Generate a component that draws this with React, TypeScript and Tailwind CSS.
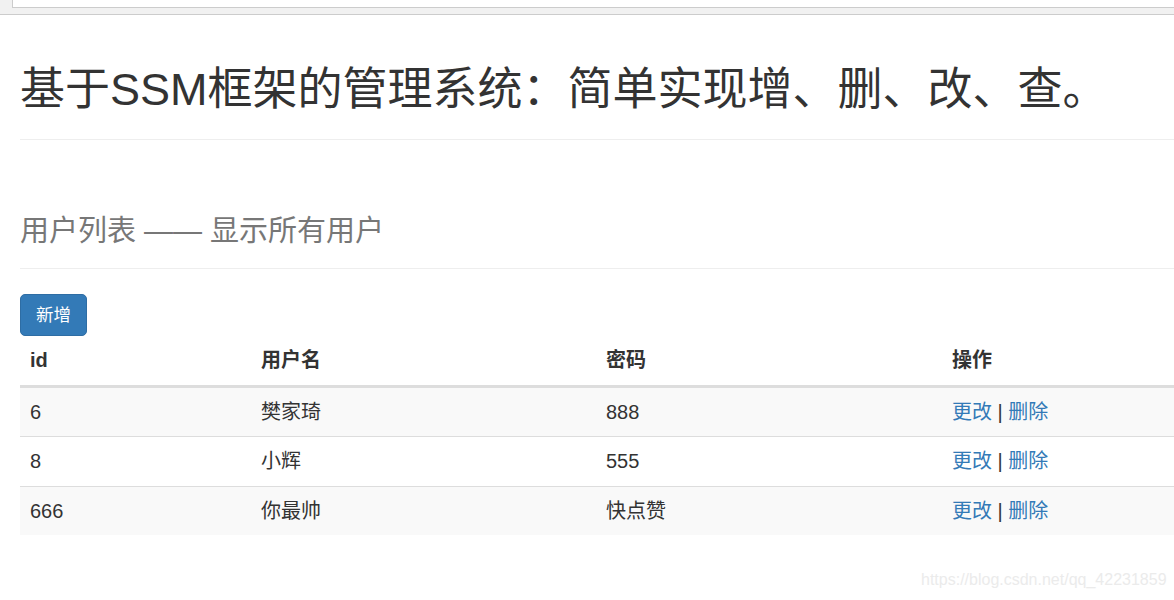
import React from 'react';

interface User {
  id: number;
  username: string;
  password: string;
}

const users: User[] = [
  { id: 6, username: '樊家琦', password: '888' },
  { id: 8, username: '小辉', password: '555' },
  { id: 666, username: '你最帅', password: '快点赞' },
];

const FONT = "font-['Liberation_Sans','Noto_Sans_CJK_SC',sans-serif]";

export default function App() {
  return (
    <div className={`relative w-[1174px] h-[600px] overflow-hidden bg-white text-[#333] ${FONT}`}>
      {/* browser chrome strip */}
      <div className="h-[15px] bg-[#f1f1f1] border-b border-[#ccc]">
        <div className="ml-[12px] h-[8px] bg-white border-l border-b border-[#ccc]"></div>
      </div>

      <div className="pl-[20px]">
        <div className="mt-[50px] pb-[24px] border-b border-[#eee]">
          <h1 className="text-[45px] leading-[50px] font-normal">基于SSM框架的管理系统：简单实现增、删、改、查。</h1>
        </div>

        <div className="mt-[75px] pb-[20px] border-b border-[#eee]">
          <h2 className="text-[29px] leading-[33px] font-normal text-[#777]">用户列表 —— 显示所有用户</h2>
        </div>

        <button className="mt-[25px] h-[42px] px-[15px] text-[17.5px] leading-[25px] text-white bg-[#337ab7] border border-[#2e6da4] rounded-[5px]">
          新增
        </button>

        <table className="w-full table-fixed border-collapse text-[20px] leading-[28.6px]">
          <colgroup>
            <col className="w-[231px]" />
            <col className="w-[345px]" />
            <col className="w-[346px]" />
            <col />
          </colgroup>
          <thead>
            <tr>
              <th className="text-left font-bold px-[10px] py-[10px] border-b-[3px] border-[#ddd]">id</th>
              <th className="text-left font-bold px-[10px] py-[10px] border-b-[3px] border-[#ddd]">用户名</th>
              <th className="text-left font-bold px-[10px] py-[10px] border-b-[3px] border-[#ddd]">密码</th>
              <th className="text-left font-bold px-[10px] py-[10px] border-b-[3px] border-[#ddd]">操作</th>
            </tr>
          </thead>
          <tbody>
            {users.map((u, i) => (
              <tr key={u.id} className={i % 2 === 0 ? 'bg-[#f9f9f9]' : 'bg-white'}>
                <td className="px-[10px] py-[10px] border-t border-[#ddd]">{u.id}</td>
                <td className="px-[10px] py-[10px] border-t border-[#ddd]">{u.username}</td>
                <td className="px-[10px] py-[10px] border-t border-[#ddd]">{u.password}</td>
                <td className="px-[10px] py-[10px] border-t border-[#ddd]">
                  <a className="text-[#337ab7]">更改</a> | <a className="text-[#337ab7]">删除</a>
                </td>
              </tr>
            ))}
          </tbody>
        </table>
      </div>

      {/* watermark */}
      <div className="absolute left-[921px] top-[570px] text-[16px] leading-[20px] text-[#ebebeb]">
        https://blog.csdn.net/qq_42231859
      </div>
    </div>
  );
}
